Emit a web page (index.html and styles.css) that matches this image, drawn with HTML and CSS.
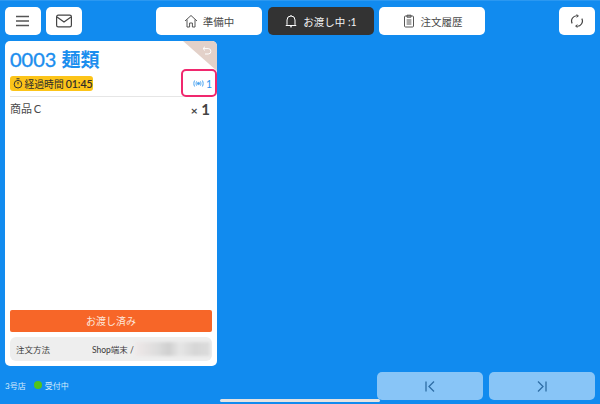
FILE: index.html
```html
<!DOCTYPE html>
<html lang="ja">
<head>
<meta charset="utf-8">
<title>お渡し中</title>
<link rel="stylesheet" href="styles.css">
</head>
<body>
<div class="screen">
  <header class="topbar">
    <div class="group">
      <button class="btn square"><svg width="18" height="14" viewBox="0 0 18 14" fill="none" stroke="#555" stroke-width="1.3"><path d="M2 2.5h13M2 7h13M2 11.5h13"/></svg></button>
      <button class="btn square"><svg width="18" height="14" viewBox="0 0 18 14" fill="none" stroke="#444" stroke-width="1.2"><rect x="1.6" y="1.2" width="14.8" height="11.6" rx="1.6"/><path d="M2 3l7 5 7-5"/></svg></button>
    </div>
    <nav class="tabs">
      <button class="btn tab"><svg width="14" height="14" viewBox="0 0 14 14" fill="none" stroke="#555" stroke-width="1"><path d="M1 7l6-5.5L13 7M3 5.5V13h2.6V9h2.8v4H11V5.5"/></svg>準備中</button>
      <button class="btn tab active"><svg width="14" height="14" viewBox="0 0 14 14" fill="none" stroke="#fff" stroke-width="1"><path d="M3 10.5V6a4 4 0 0 1 8 0v4.5l1 1H2zM6 12.8h2M7 1v1"/></svg>お渡し中 :1</button>
      <button class="btn tab"><svg width="14" height="14" viewBox="0 0 14 14" fill="none" stroke="#555" stroke-width="1"><rect x="2.5" y="2" width="9" height="11" rx="1"/><path d="M5 1.2h4v2H5zM4.6 6h4.8M4.6 8h4.8M4.6 10h4.8"/></svg>注文履歴</button>
    </nav>
    <button class="btn square"><svg width="14" height="14" viewBox="0 0 14 14" fill="none" stroke="#444" stroke-width="1.2"><path d="M2.2 9.4A5.2 5.2 0 0 1 7.5 1.8M11.8 4.6A5.2 5.2 0 0 1 6.5 12.2"/><path d="M6.6 0.6L8.4 1.9 6.6 3.3M7.4 10.7L5.6 12.1 7.4 13.4" stroke-width="1"/></svg></button>
  </header>

  <main class="content">
    <article class="card">
      <div class="corner"></div>
      <svg class="corner-icon" width="10" height="9" viewBox="0 0 10 9" fill="none" stroke="#fff" stroke-width="1"><path d="M3 .7L1 2.6l2 1.9M1 2.6h5.2a2.6 2.6 0 0 1 0 5.4H3"/></svg>
      <h1 class="title">0003 <span class="title-cjk">麺類</span></h1>
      <div class="status-row">
        <span class="timer"><svg width="10" height="11" viewBox="0 0 10 11" fill="none" stroke="#333" stroke-width="1"><circle cx="5" cy="6.2" r="3.8"/><path d="M3.5.8h3M5 4v2.4"/></svg>経過時間 <span class="time">01:45</span></span>
        <span class="signal"><svg width="11" height="7" viewBox="0 0 11 7" fill="none" stroke="#4aa3f0" stroke-width="1"><circle cx="5.5" cy="3.5" r="1.1" fill="#4aa3f0"/><path d="M3.6 1.4c-.7 1.3-.7 2.9 0 4.2M7.4 1.4c.7 1.3.7 2.9 0 4.2M1.6.5c-1 1.9-1 4.1 0 6M9.4.5c1 1.9 1 4.1 0 6"/></svg>1</span>
        <span class="highlight"></span>
      </div>
      <div class="item">
        <span class="item-name">商品 C</span>
        <span class="qty"><small>×</small> 1</span>
      </div>
      <button class="done">お渡し済み</button>
      <div class="info">
        <span class="info-label">注文方法</span>
        <span class="info-value">Shop端末 /<span class="blur"></span></span>
      </div>
    </article>
  </main>

  <footer class="footer">
    <div class="shop">3号店<span class="dot"></span>受付中</div>
    <div class="pager">
      <button class="btn page"><svg width="12" height="11" viewBox="0 0 12 11" fill="none" stroke="#2f6ea6" stroke-width="1.3"><path d="M2 .5v10M10 .5L5 5.5l5 5"/></svg></button>
      <button class="btn page"><svg width="12" height="11" viewBox="0 0 12 11" fill="none" stroke="#2f6ea6" stroke-width="1.3"><path d="M10 .5v10M2 .5l5 5-5 5"/></svg></button>
    </div>
  </footer>
  <div class="home-bar"></div>
</div>
</body>
</html>
```
FILE: styles.css
```css
* { box-sizing: border-box; }
html, body { margin: 0; padding: 0; }
body {
  width: 600px;
  height: 404px;
  overflow: hidden;
  font-family: "Lato", "Noto Sans CJK JP", sans-serif;
  color: #444;
}
button { font: inherit; border: 0; padding: 0; }
svg { flex: none; display: block; }
.screen {
  position: relative;
  width: 600px;
  height: 404px;
  background: #118bef;
  border-top: 1px solid #2b98f1;
  padding: 6px 5px 4px;
  display: flex;
  flex-direction: column;
}
.topbar {
  display: flex;
  justify-content: space-between;
  height: 28px;
}
.group { display: flex; gap: 5px; }
.tabs { display: flex; gap: 5.5px; margin-left: 74px; margin-right: 74px; }
.btn {
  background: #fff;
  border-radius: 5px;
  display: flex;
  align-items: center;
  justify-content: center;
  color: #4a4a4a;
  font-size: 10.5px;
}
.square { width: 36px; height: 28px; }
.tab { width: 106px; height: 28px; gap: 5px; }
.tab.active { background: #333; color: #f2f2f2; }
.content { flex: 1; padding-top: 6px; min-height: 0; }
.card {
  position: relative;
  width: 212px;
  height: 325px;
  background: #fff;
  border-radius: 5px;
  padding: 5px;
  display: flex;
  flex-direction: column;
  overflow: hidden;
}
.corner {
  position: absolute;
  top: 0;
  right: 0;
  width: 34px;
  height: 30px;
  background: #e3d1c9;
  clip-path: polygon(0 0, 100% 0, 100% 100%);
}
.corner-icon { position: absolute; top: 5px; right: 5px; }
.title {
  margin: 0;
  font-size: 20px;
  line-height: 26px;
  font-weight: 400;
  -webkit-text-stroke: 0.35px #1c8eee;
  color: #1c8eee;
  height: 27px;
  white-space: nowrap;
}
.title-cjk { font-weight: 700; font-size: 19px; -webkit-text-stroke: 0; }
.status-row {
  position: relative;
  display: flex;
  justify-content: space-between;
  align-items: center;
  height: 24px;
  padding-bottom: 2px;
  border-bottom: 1px solid #e6e6e6;
}
.timer {
  display: flex;
  align-items: center;
  gap: 2px;
  height: 15px;
  width: 83px;
  padding: 0 1px 0 2.5px;
  background: #fcc419;
  border-radius: 3px;
  font-size: 9.8px;
  color: #2b2b2b;
  white-space: nowrap;
}
.time { font-size: 10.5px; -webkit-text-stroke: 0.2px #2b2b2b; }
.signal {
  display: flex;
  align-items: center;
  gap: 2px;
  font-size: 10.5px;
  line-height: 12px;
  color: #2a94ee;
}
.highlight {
  position: absolute;
  top: -4px;
  right: -5px;
  width: 36px;
  height: 28px;
  border: 2px solid #f0286e;
  border-radius: 5px;
}
.item {
  display: flex;
  justify-content: space-between;
  flex: 1;
  align-items: flex-start;
  font-size: 11px;
  word-spacing: -1px;
  color: #4a4a4a;
  padding-top: 3px;
}
.qty { font-size: 15px; font-weight: 700; line-height: 18px; color: #444; padding-right: 2px; word-spacing: 0; }
.qty small { font-size: 12px; font-weight: 700; }
.done {
  height: 22px;
  flex: none;
  background: #f76628;
  border-radius: 2px;
  color: #fde7dc;
  font-size: 10px;
  padding-bottom: 1px;
}
.info {
  margin-top: 5px;
  height: 24px;
  flex: none;
  background: #eee;
  border-radius: 6px;
  padding: 0 1px 0 6px;
  display: flex;
  align-items: center;
  font-size: 8.5px;
  color: #3a3a3a;
  white-space: nowrap;
}
.info-label { width: 76px; flex: none; }
.info-value { display: flex; align-items: center; }
.blur {
  display: block;
  width: 75px;
  height: 14px;
  margin-left: 1px;
  background: linear-gradient(90deg, #efe9e9, #dcdcdc 30%, #cfcfcf 45%, #e6e6e6 60%, #d6d6d6 80%, #dcdcdc);
  filter: blur(1.5px);
}
.footer {
  display: flex;
  justify-content: space-between;
  align-items: center;
  height: 28px;
}
.shop {
  display: flex;
  align-items: center;
  font-size: 8px;
  color: #d8ebfc;
  padding-bottom: 2px;
}
.dot {
  width: 8px;
  height: 8px;
  border-radius: 50%;
  background: #52c41a;
  margin: 0 2.5px 0 8.5px;
}
.pager { display: flex; gap: 6px; }
.page { width: 106px; height: 28px; background: #88c5f7; }
.home-bar {
  position: absolute;
  left: 220px;
  bottom: 2px;
  width: 160px;
  height: 3px;
  background: #e3e3e3;
  border-radius: 2px;
}
```
